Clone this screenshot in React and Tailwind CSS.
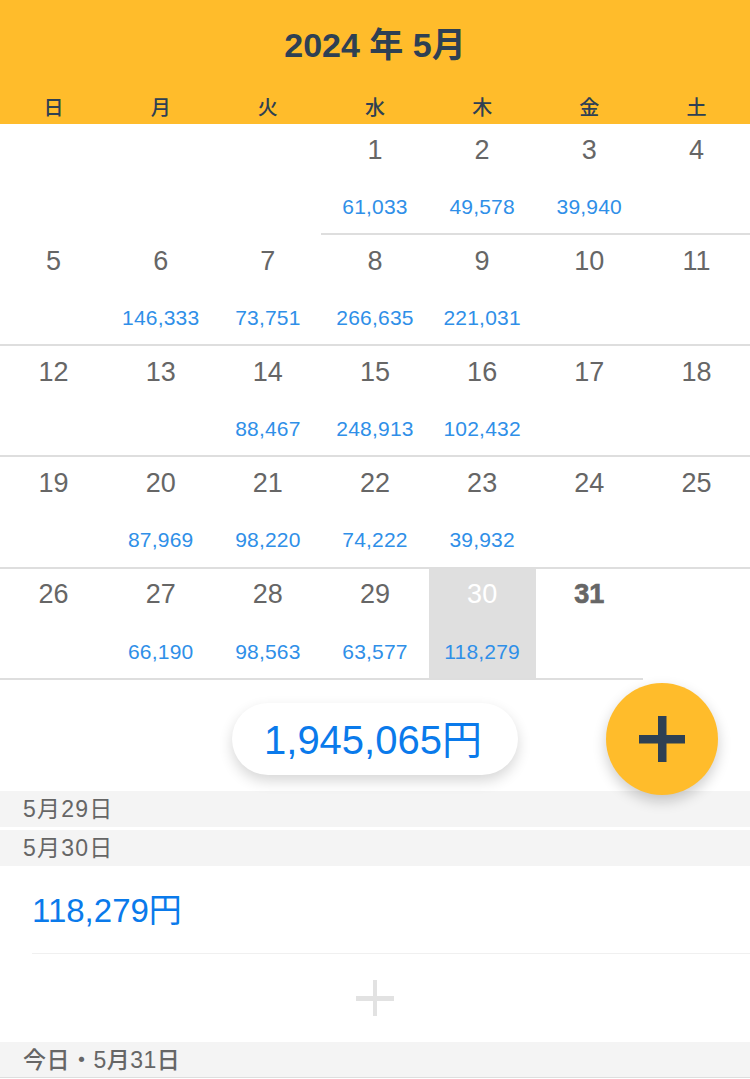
const font = '[font-family:"Liberation_Sans","Noto_Sans_CJK_JP",sans-serif]'

const weekdays = ['日', '月', '火', '水', '木', '金', '土']

// null は当月以外の空セル
const weeks = [
  [null, null, null, { d: 1, v: '61,033' }, { d: 2, v: '49,578' }, { d: 3, v: '39,940' }, { d: 4 }],
  [{ d: 5 }, { d: 6, v: '146,333' }, { d: 7, v: '73,751' }, { d: 8, v: '266,635' }, { d: 9, v: '221,031' }, { d: 10 }, { d: 11 }],
  [{ d: 12 }, { d: 13 }, { d: 14, v: '88,467' }, { d: 15, v: '248,913' }, { d: 16, v: '102,432' }, { d: 17 }, { d: 18 }],
  [{ d: 19 }, { d: 20, v: '87,969' }, { d: 21, v: '98,220' }, { d: 22, v: '74,222' }, { d: 23, v: '39,932' }, { d: 24 }, { d: 25 }],
  [{ d: 26 }, { d: 27, v: '66,190' }, { d: 28, v: '98,563' }, { d: 29, v: '63,577' }, { d: 30, v: '118,279', selected: true }, { d: 31, today: true }, null],
]

function DayCell({ day, tall, last }) {
  const h = tall ? 'h-[112px] ' : 'h-[111px] '
  if (!day) return <div className={h} />
  return (
    <div className={h + 'flex flex-col items-center border-b-2 border-[#dedede] ' + (day.selected ? 'bg-[#dfdfdf]' : '')}>
      <span
        className={
          (last ? 'mt-[8px] ' : 'mt-[9px] ') +
          'h-[34px] leading-[34px] text-[27px] ' +
          (day.selected ? 'text-white ' : 'text-[#666666] ') +
          (day.today ? 'font-bold [-webkit-text-stroke:0.7px_#666666]' : '')
        }
      >
        {day.d}
      </span>
      {day.v && (
        <span className={(last ? 'mt-[28px] ' : 'mt-[27px] ') + 'h-[26px] leading-[26px] text-[21px] tracking-[0.2px] text-[#2f8fe8]'}>
          {day.v}
        </span>
      )}
    </div>
  )
}

function DateBar({ children, className = '' }) {
  return (
    <div className={'h-[36px] pl-[23px] flex items-center bg-[#f4f4f4] text-[23px] text-[#666666] ' + className}>
      {children}
    </div>
  )
}

export default function App() {
  return (
    <div className={font + ' relative w-[750px] h-[1079px] overflow-hidden bg-white'}>
      <header className="h-[124px] bg-[#ffbc2b] flex flex-col">
        <h1 className="mt-[24px] h-[42px] leading-[42px] text-center text-[34px] font-bold text-[#2e4053]">2024 年 5月</h1>
        <div className="mt-[30px] grid grid-cols-7">
          {weekdays.map((w) => (
            <span key={w} className="text-center text-[20px] leading-[24px] font-medium text-[#2e4053]">{w}</span>
          ))}
        </div>
      </header>

      {weeks.map((week, i) => (
        <div key={i} className="grid grid-cols-7">
          {week.map((day, j) => (
            <DayCell key={j} day={day} tall={i === 3} last={i === 4} />
          ))}
        </div>
      ))}

      <div className="h-[111px] flex justify-center pt-[23px]">
        <div className="w-[286px] h-[72px] pr-[4px] pt-[1px] rounded-full bg-white flex items-center justify-center text-[40px] text-[#0a7aeb] shadow-[0_6px_14px_rgba(0,0,0,0.16)]">
          1,945,065円
        </div>
      </div>

      <DateBar className="tracking-[1.2px]">5月29日</DateBar>
      <div className="h-[3px]" />
      <DateBar className="tracking-[1.2px]">5月30日</DateBar>
      <div className="ml-[32px] h-[88px] pt-[2px] flex items-center border-b border-[#f0f0f0] text-[33px] text-[#0a7aeb]">118,279円</div>
      <div className="h-[88px] flex items-center justify-center">
        <svg width="38" height="36" viewBox="0 0 38 36">
          <path d="M17 0h4v16h17v5H21v15h-4V21H0v-5h17z" fill="#e2e2e2" />
        </svg>
      </div>
      <DateBar className="border-b border-[#dedede] pt-[2px] font-medium tracking-[0.5px]">今日・5月31日</DateBar>

      <button
        type="button"
        className="absolute left-[606px] top-[683px] w-[112px] h-[112px] rounded-full bg-[#ffbc2b] flex items-center justify-center shadow-[0_6px_14px_rgba(0,0,0,0.2)]"
      >
        <svg width="46" height="46" viewBox="0 0 46 46">
          <path d="M19 0h8.500v19H46v8.500H27.500V46H19V27.500H0V19h19z" fill="#2e4053" />
        </svg>
      </button>
    </div>
  )
}
